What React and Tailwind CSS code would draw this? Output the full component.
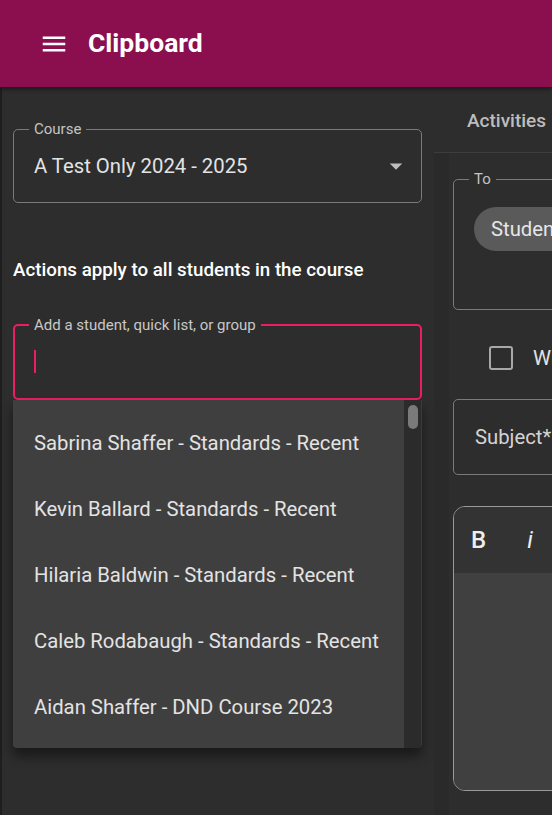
import React from 'react';

const students = [
  'Sabrina Shaffer - Standards - Recent',
  'Kevin Ballard - Standards - Recent',
  'Hilaria Baldwin - Standards - Recent',
  'Caleb Rodabaugh - Standards - Recent',
  'Aidan Shaffer - DND Course 2023',
];

function MenuIcon() {
  return (
    <svg width="30" height="30" viewBox="0 0 24 24" fill="#ffffff">
      <path d="M3 18h18v-2H3zm0-5h18v-2H3zm0-7v2h18V6z" />
    </svg>
  );
}

function ArrowDropDown() {
  return (
    <svg width="30" height="30" viewBox="0 0 24 24" fill="#bdbdbd" className="-my-[3px] shrink-0">
      <path d="M7 10l5 5 5-5z" />
    </svg>
  );
}

export default function App() {
  return (
    <div className="w-[552px] h-[815px] overflow-hidden bg-[#2d2d2d] flex flex-col font-['Roboto','Liberation_Sans',sans-serif] text-[#e3e3e3]">
      {/* App bar */}
      <header className="relative z-10 h-[87px] shrink-0 bg-[#8b0e4f] flex items-center pl-[39px] shadow-[0_2px_4px_rgba(0,0,0,0.5)]">
        <MenuIcon />
        <h1 className="ml-[19px] text-[26.5px] leading-none font-bold text-white">Clipboard</h1>
      </header>

      <div className="flex flex-1 min-h-0 border-l-2 border-[#1e1e1e]">
        {/* Left panel */}
        <div className="w-[432px] shrink-0 pl-[11px] pr-[12px] pt-[34px]">
          <fieldset className="border border-[#7a7a7a] rounded-[5px] pl-[20px] pr-[10px] pb-[24px]">
            <legend className="-ml-[5px] px-[5px] text-[15px] leading-[16px] text-[#c4c4c4]">Course</legend>
            <div className="mt-[17px] h-[24px] flex items-center justify-between">
              <span className="text-[20.3px] leading-[24px] text-[#e3e3e3]">A Test Only 2024 - 2025</span>
              <ArrowDropDown />
            </div>
          </fieldset>

          <p className="mt-[56px] text-[18.75px] leading-[22px] font-medium text-white whitespace-nowrap">
            Actions apply to all students in the course
          </p>

          <fieldset className="mt-[36px] border-2 border-[#e91e63] rounded-[5px] pl-[19px]">
            <legend className="-ml-[5px] px-[5px] text-[15px] leading-[16px] text-[#c8c8c8]">
              Add a student, quick list, or group
            </legend>
            <div className="mt-[17px] mb-[25px] w-[2px] h-[23px] bg-[#e91e63]" />
          </fieldset>

          {/* Autocomplete listbox */}
          <div className="flex h-[348px] rounded-b-[4px] overflow-hidden bg-[#2b2b2b] shadow-[0_8px_12px_rgba(0,0,0,0.45)]">
            <ul className="flex-1 bg-[#3f3f3f] py-[10px]">
              {students.map((s) => (
                <li key={s} className="h-[66px] flex items-center px-[21px] text-[20.3px] text-[#e3e3e3] whitespace-nowrap">
                  {s}
                </li>
              ))}
            </ul>
            <div className="w-[18px] shrink-0 border-r border-[#3a3a3a] pt-[5px] pl-[4px]">
              <div className="w-[10px] h-[24px] rounded-full bg-[#7a7a7a]" />
            </div>
          </div>
        </div>

        {/* Right panel */}
        <div className="flex-1 min-w-0 overflow-hidden flex flex-col">
          <div className="h-[66px] shrink-0 border-b border-[#3d3d3d] flex items-center pl-[33px] pt-[3px]">
            <span className="text-[19px] font-medium text-[#bdbdbd] whitespace-nowrap">Activities</span>
          </div>
          <div className="flex flex-1">
            <div className="w-[15px] shrink-0 bg-[#2a2a2a]" />
            <div className="w-[400px] shrink-0 pl-[4px] pt-[18px] flex flex-col">
              <fieldset className="h-[139px] border border-[#7a7a7a] rounded-[5px] pl-[20px]">
                <legend className="-ml-[5px] px-[5px] text-[15px] leading-[16px] text-[#c4c4c4]">To</legend>
                <div className="mt-[20px] inline-flex h-[44px] items-center rounded-full bg-[#5a5a5a] px-[17px] text-[20.3px] text-[#e6e6e6]">
                  Students in course
                </div>
              </fieldset>

              <label className="mt-[34px] ml-[36px] h-[28px] flex items-center">
                <span className="w-[24px] h-[24px] border-2 border-[#a8a8a8] rounded-[3px]" />
                <span className="ml-[20px] text-[20.3px] text-[#e3e3e3] whitespace-nowrap">Whole class</span>
              </label>

              <div className="mt-[27px] h-[76px] border border-[#7a7a7a] rounded-[5px] pl-[21px] flex items-center text-[20.3px] text-[#d4d4d4]">
                Subject*
              </div>

              <div className="mt-[31px] h-[285px] border border-[#9a9a9a] rounded-[12px] overflow-hidden flex flex-col">
                <div className="h-[66px] shrink-0 bg-[#333333] flex items-center pl-[17px] text-[24px] text-[#eeeeee]">
                  <span className="font-medium">B</span>
                  <span className="ml-[41px] italic">i</span>
                </div>
                <div className="flex-1 bg-[#404040]" />
              </div>
            </div>
          </div>
        </div>
      </div>
    </div>
  );
}
